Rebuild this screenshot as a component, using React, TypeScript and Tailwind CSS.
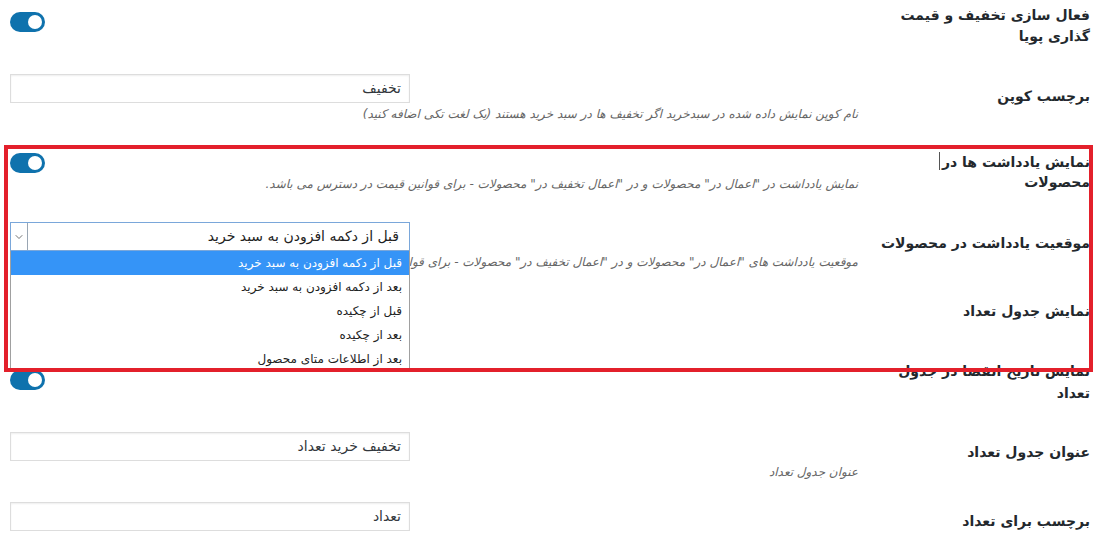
import { ChevronDown } from 'lucide-react';

// settings page of a pricing plugin, rtl form table
const FONT = { fontFamily: '"DejaVu Sans", Tahoma, sans-serif' };

function Toggle() {
  return (
    <div className="relative w-[35px] h-[20px] rounded-full bg-[#0f72ad] self-end">
      <span className="absolute right-[3px] top-[3px] w-[14px] h-[14px] rounded-full bg-white" />
    </div>
  );
}

function TextInput({ value }: { value: string }) {
  return (
    <div className="w-[400px] h-[29px] self-end border border-[#dddddd] bg-white shadow-[inset_0_1px_2px_rgba(0,0,0,0.07)] flex items-center px-[8px] text-[14px] text-[#32373c]">
      {value}
    </div>
  );
}

function Desc({ children }: { children: string }) {
  return <p className="text-[12px] italic text-[#666] leading-[18px] mt-[2px]">{children}</p>;
}

const OPTIONS = [
  'قبل از دکمه افزودن به سبد خرید',
  'بعد از دکمه افزودن به سبد خرید',
  'قبل از چکیده',
  'بعد از چکیده',
  'بعد از اطلاعات متای محصول',
];

function OpenSelect() {
  return (
    <div className="relative w-[400px] self-end">
      <div className="h-[29px] border border-[#7aa7da] bg-white flex items-center justify-between">
        <span className="pr-[10px] text-[14px] text-[#222]">قبل از دکمه افزودن به سبد خرید</span>
        <span className="w-[17px] h-full border-r border-[#9aa6b3] flex items-center justify-center text-[#444]">
          <ChevronDown size={12} strokeWidth={1.5} />
        </span>
      </div>
      <ul className="absolute top-full left-0 w-[400px] z-10 bg-white border border-t-0 border-[#a0a0a0]">
        {OPTIONS.map((o, i) => (
          <li
            key={o}
            className={`h-[24px] leading-[24px] pr-[7px] text-[12px] ${
              i === 0 ? 'bg-[#3594f7] text-white' : 'text-[#222]'
            }`}
          >
            {o}
          </li>
        ))}
      </ul>
    </div>
  );
}

export default function App() {
  return (
    <div dir="rtl" style={FONT} className="relative w-[1097px] h-[547px] overflow-hidden bg-white pr-[7px]">
      {/* row 1 */}
      <div className="flex h-[60px]">
        <div className="w-[222px] shrink-0 pl-[22px] pt-[5px] text-[14px] font-bold leading-[21px] text-[#23282d]">
          فعال سازی تخفیف و قیمت گذاری پویا
        </div>
        <div className="flex-1 flex flex-col px-[10px] pt-[12px]">
          <Toggle />
        </div>
      </div>

      {/* row 2 */}
      <div className="flex h-[75px]">
        <div className="w-[222px] shrink-0 pl-[22px] pt-[26px] text-[14px] font-bold leading-[20px] text-[#23282d]">
          برچسب کوپن
        </div>
        <div className="flex-1 flex flex-col px-[10px] pt-[14px]">
          <TextInput value="تخفیف" />
          <Desc>نام کوپن نمایش داده شده در سبدخرید اگر تخفیف ها در سبد خرید هستند (یک لغت تکی اضافه کنید)</Desc>
        </div>
      </div>

      {/* row 3 */}
      <div className="flex h-[75px]">
        <div className="w-[222px] shrink-0 pl-[22px] pt-[17px] text-[14px] font-bold leading-[20px] text-[#23282d]">
          نمایش یادداشت ها در محصولات
        </div>
        <div className="flex-1 flex flex-col px-[10px] pt-[18px]">
          <Toggle />
          <Desc>نمایش یادداشت در "اعمال در" محصولات و در "اعمال تخفیف در" محصولات - برای قوانین قیمت در دسترس می باشد.</Desc>
        </div>
      </div>

      {/* row 4 */}
      <div className="flex h-[75px]">
        <div className="w-[222px] shrink-0 pl-[22px] pt-[23px] text-[14px] font-bold leading-[20px] text-[#23282d] whitespace-nowrap">
          موقعیت یادداشت در محصولات
        </div>
        <div className="flex-1 flex flex-col px-[10px] pt-[12px]">
          <OpenSelect />
          <Desc>موقعیت یادداشت های "اعمال در" محصولات و در "اعمال تخفیف در" محصولات - برای قوانین قیمت در دسترس می باشد.</Desc>
        </div>
      </div>

      {/* row 5 */}
      <div className="flex h-[70px]">
        <div className="w-[222px] shrink-0 pl-[22px] pt-[16px] text-[14px] font-bold leading-[20px] text-[#23282d]">
          نمایش جدول تعداد
        </div>
        <div className="flex-1 flex flex-col px-[10px] pt-[17px]">
          <Toggle />
        </div>
      </div>

      {/* row 6 */}
      <div className="flex h-[65px]">
        <div className="w-[222px] shrink-0 pl-[22px] pt-[5px] text-[14px] font-bold leading-[22px] text-[#23282d]">
          نمایش تاریخ انقضا در جدول تعداد
        </div>
        <div className="flex-1 flex flex-col px-[10px] pt-[15px]">
          <Toggle />
        </div>
      </div>

      {/* row 7 */}
      <div className="flex h-[70px]">
        <div className="w-[222px] shrink-0 pl-[22px] pt-[22px] text-[14px] font-bold leading-[20px] text-[#23282d]">
          عنوان جدول تعداد
        </div>
        <div className="flex-1 flex flex-col px-[10px] pt-[12px]">
          <TextInput value="تخفیف خرید تعداد" />
          <Desc>عنوان جدول تعداد</Desc>
        </div>
      </div>

      {/* row 8 */}
      <div className="flex h-[57px]">
        <div className="w-[222px] shrink-0 pl-[22px] pt-[21px] text-[14px] font-bold leading-[20px] text-[#23282d]">
          برچسب برای تعداد
        </div>
        <div className="flex-1 flex flex-col px-[10px] pt-[12px]">
          <TextInput value="تعداد" />
        </div>
      </div>

      {/* annotation box and mouse cursor */}
      <div className="absolute left-[4px] top-[145px] w-[1089px] h-[227px] border-[4px] border-[#e3202b] z-20 pointer-events-none" />
      <div className="absolute left-[939px] top-[152px] w-px h-[18px] bg-[#555] z-20" />
    </div>
  );
}
